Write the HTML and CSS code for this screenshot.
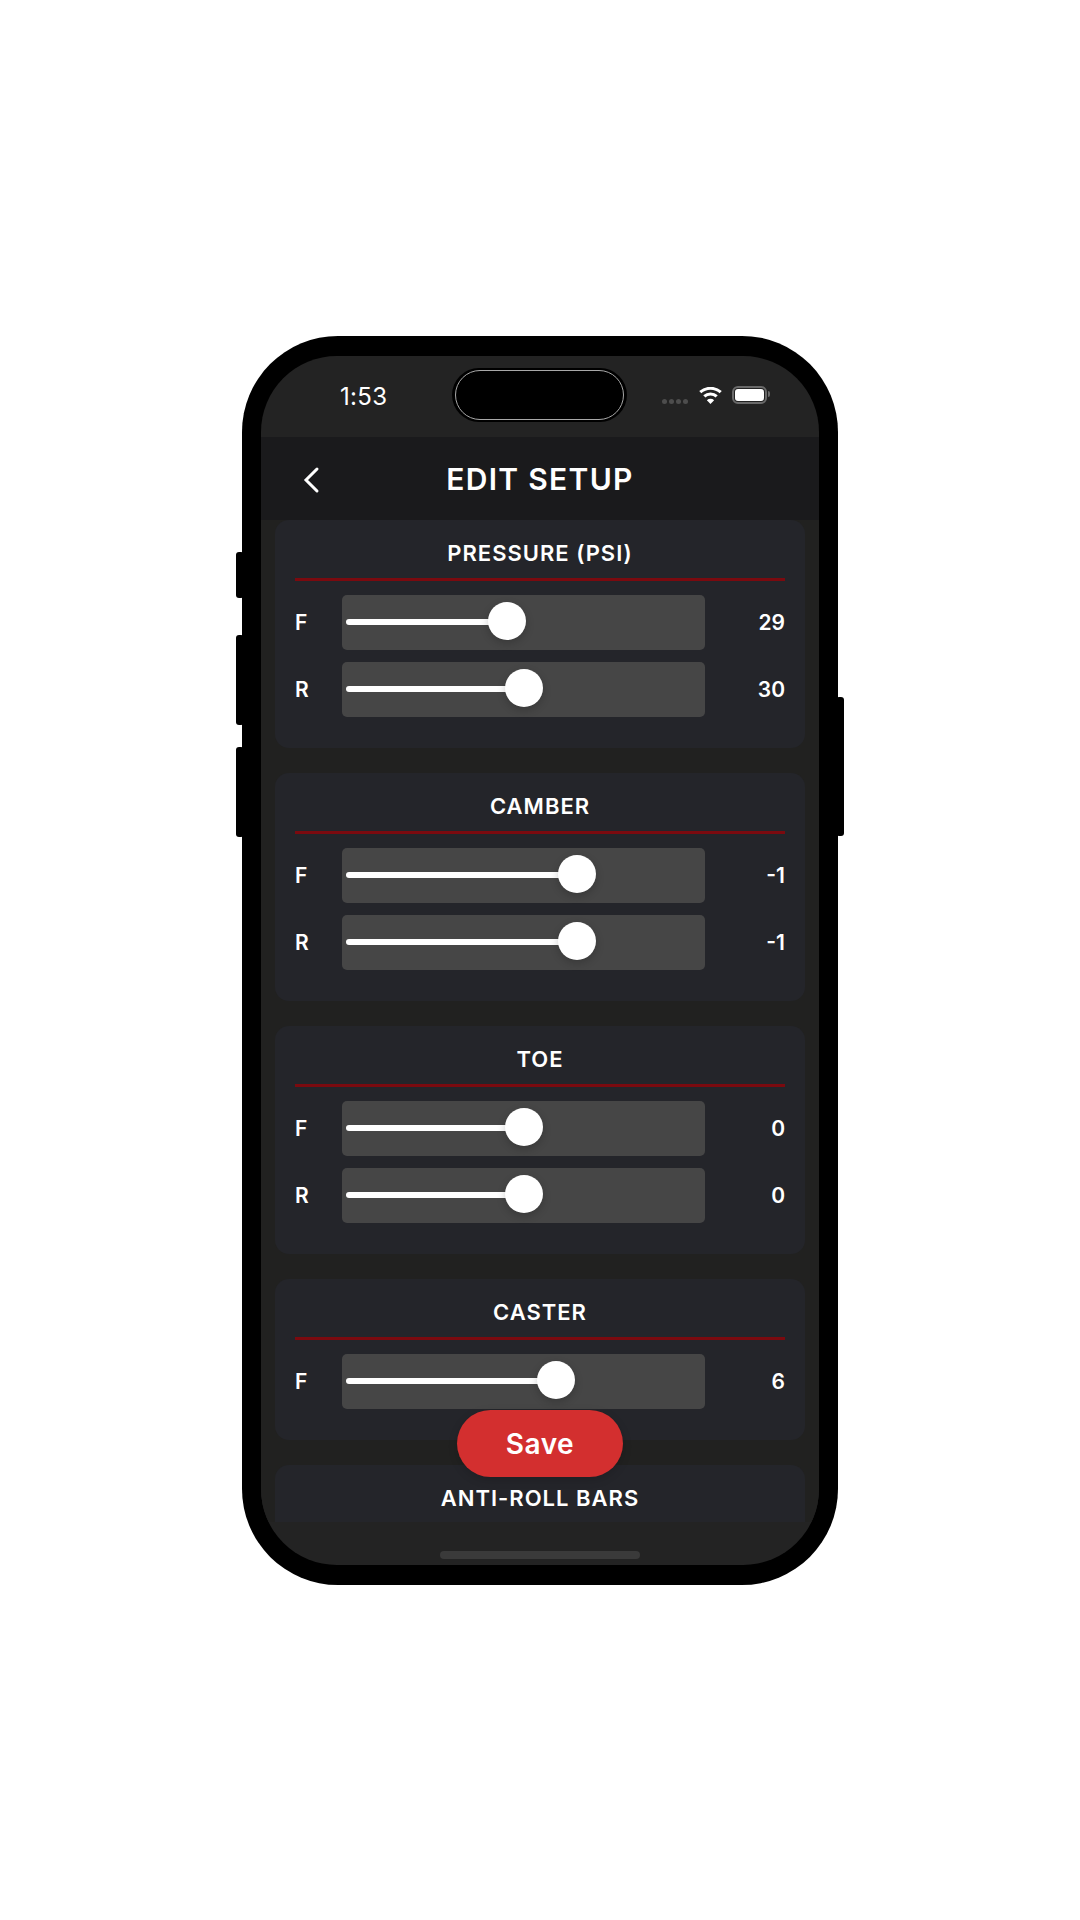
FILE: index.html
```html
<!DOCTYPE html>
<html lang="en">
<head>
    <meta charset="UTF-8">
    <meta name="viewport" content="width=device-width, initial-scale=1.0">
    <title>Edit Setup</title>
    <link rel="stylesheet" href="styles.css">
</head>
<body>
    <div class="phone">
        <span class="side-btn btn-mute"></span>
        <span class="side-btn btn-vol-up"></span>
        <span class="side-btn btn-vol-down"></span>
        <span class="side-btn btn-power"></span>

        <div class="screen">
            <div class="status-bar">
                <span class="status-time">1:53</span>
                <div class="island"><div class="island-inner"></div></div>
                <div class="status-icons">
                    <div class="signal"><i></i><i></i><i></i><i></i></div>
                    <svg class="wifi" width="23" height="17" viewBox="2 0 19 14.500" preserveAspectRatio="none">
                        <path d="M11.500 2.400c2.900 0 5.600 1.100 7.600 3l1.700-1.900a13.600 13.600 0 0 0-18.600 0l1.700 1.900c2-1.900 4.700-3 7.600-3z" fill="#fff"/>
                        <path d="M11.500 7.200c1.600 0 3.100.6 4.200 1.700l1.800-1.900a8.800 8.800 0 0 0-12 0l1.800 1.900c1.100-1.100 2.600-1.700 4.200-1.700z" fill="#fff"/>
                        <path d="M11.500 14.500l3-3.200a4.300 4.300 0 0 0-6 0z" fill="#fff"/>
                    </svg>
                    <div class="battery"><div class="battery-level"></div></div>
                </div>
            </div>

            <div class="header">
                <svg class="back" width="18" height="28" viewBox="0 0 18 28">
                    <path d="M15 3L4 14l11 11" fill="none" stroke="#fff" stroke-width="3" stroke-linecap="round"/>
                </svg>
                <h1>EDIT SETUP</h1>
            </div>

            <div class="content">
                <section class="card">
                    <h2>PRESSURE (PSI)</h2>
                    <div class="row">
                        <span class="row-label">F</span>
                        <div class="slider"><div class="fill" style="width: 161px"><span class="thumb"></span></div></div>
                        <span class="row-value">29</span>
                    </div>
                    <div class="row">
                        <span class="row-label">R</span>
                        <div class="slider"><div class="fill" style="width: 178px"><span class="thumb"></span></div></div>
                        <span class="row-value">30</span>
                    </div>
                </section>

                <section class="card">
                    <h2>CAMBER</h2>
                    <div class="row">
                        <span class="row-label">F</span>
                        <div class="slider"><div class="fill" style="width: 231px"><span class="thumb"></span></div></div>
                        <span class="row-value">-1</span>
                    </div>
                    <div class="row">
                        <span class="row-label">R</span>
                        <div class="slider"><div class="fill" style="width: 231px"><span class="thumb"></span></div></div>
                        <span class="row-value">-1</span>
                    </div>
                </section>

                <section class="card">
                    <h2>TOE</h2>
                    <div class="row">
                        <span class="row-label">F</span>
                        <div class="slider"><div class="fill" style="width: 178px"><span class="thumb"></span></div></div>
                        <span class="row-value">0</span>
                    </div>
                    <div class="row">
                        <span class="row-label">R</span>
                        <div class="slider"><div class="fill" style="width: 178px"><span class="thumb"></span></div></div>
                        <span class="row-value">0</span>
                    </div>
                </section>

                <section class="card">
                    <h2>CASTER</h2>
                    <div class="row">
                        <span class="row-label">F</span>
                        <div class="slider"><div class="fill" style="width: 210px"><span class="thumb"></span></div></div>
                        <span class="row-value">6</span>
                    </div>
                </section>

                <section class="card card-last">
                    <h2>ANTI-ROLL BARS</h2>
                </section>
            </div>

            <button class="save-btn">Save</button>

            <div class="home-area"><span class="home-bar"></span></div>
        </div>
    </div>
</body>
</html>
```

FILE: styles.css
```css
* {
    box-sizing: border-box;
}
body {
    margin: 0;
    width: 1080px;
    height: 1920px;
    display: flex;
    align-items: center;
    justify-content: center;
    background-color: #fff;
    font-family: Inter, "Noto Sans", sans-serif;
    color: #fff;
}
.phone {
    position: relative;
    width: 596px;
    height: 1249px;
    background: #000;
    border-radius: 96px;
    padding: 20px 19px;
}
.side-btn {
    position: absolute;
    width: 8px;
    background: #000;
    border-radius: 3px;
}
.btn-mute {
    left: -6px;
    top: 216px;
    height: 46px;
}
.btn-vol-up {
    left: -6px;
    top: 299px;
    height: 90px;
}
.btn-vol-down {
    left: -6px;
    top: 411px;
    height: 90px;
}
.btn-power {
    right: -6px;
    top: 361px;
    height: 139px;
}
.screen {
    position: relative;
    height: 100%;
    display: flex;
    flex-direction: column;
    background: #232323;
    border-radius: 76px;
    overflow: hidden;
}
.status-bar {
    flex: none;
    height: 81px;
    display: flex;
    align-items: center;
    justify-content: space-between;
    padding: 0 52px 0 79px;
}
.status-time {
    font-size: 24px;
    letter-spacing: 0.3px;
}
.island {
    position: absolute;
    left: 191px;
    top: 12px;
    width: 175px;
    height: 54px;
    padding: 2px 3px;
    background: #000;
    border-radius: 27px;
}
.island-inner {
    height: 100%;
    background: #000;
    border: 1px solid #a8a8a8;
    border-radius: 25px;
}
.status-icons {
    display: flex;
    align-items: center;
    padding-bottom: 2px;
}
.signal {
    display: flex;
    gap: 2px;
    margin-right: 11px;
    margin-top: 13px;
}
.signal i {
    width: 5px;
    height: 5px;
    border-radius: 50%;
    background: #4d4d4d;
}
.wifi {
    margin-right: 10px;
}
.battery {
    position: relative;
    width: 35px;
    height: 18px;
    padding: 1px;
    border: 2px solid #6a6a6a;
    border-radius: 6px;
}
.battery::after {
    content: "";
    position: absolute;
    right: -5px;
    top: 3px;
    width: 2px;
    height: 6px;
    background: #6a6a6a;
    border-radius: 0 2px 2px 0;
}
.battery-level {
    height: 100%;
    background: #fff;
    border-radius: 3px;
}
.header {
    position: relative;
    flex: none;
    height: 83px;
    display: flex;
    align-items: center;
    justify-content: center;
    padding-top: 2px;
    background: #1a1a1c;
}
.header h1 {
    margin: 0;
    font-size: 30px;
    font-weight: 600;
    letter-spacing: 1.3px;
}
.back {
    position: absolute;
    left: 41px;
    top: 29px;
}
.content {
    flex: 1;
    min-height: 0;
    overflow: hidden;
    padding: 0 14px;
    background: #212120;
}
.card {
    display: flex;
    flex-direction: column;
    gap: 12px;
    margin-bottom: 25px;
    padding: 0 20px 31px;
    background: #24252a;
    border-radius: 14px;
}
/* runs on below the fold, only its title is in view */
.card-last {
    height: 120px;
}
.card h2 {
    margin: 0 0 2px;
    height: 61px;
    line-height: 67px;
    font-size: 22px;
    font-weight: 600;
    letter-spacing: 1px;
    text-align: center;
    border-bottom: 3px solid #7b0a0f;
}
.row {
    display: flex;
    align-items: center;
}
.row-label {
    width: 47px;
    font-size: 21px;
    font-weight: 600;
}
.row-value {
    flex: 1;
    text-align: right;
    font-size: 21px;
    font-weight: 600;
}
.slider {
    width: 363px;
    height: 55px;
    display: flex;
    align-items: center;
    padding: 0 4px;
    background: #464646;
    border-radius: 5px;
}
.fill {
    position: relative;
    height: 6px;
    background: #fff;
    border-radius: 3px;
}
.thumb {
    position: absolute;
    right: -19px;
    top: -17px;
    width: 38px;
    height: 38px;
    background: #fff;
    border-radius: 50%;
    box-shadow: 0 3px 8px rgba(0, 0, 0, 0.2);
}
.save-btn {
    position: absolute;
    left: 196px;
    top: 1054px;
    width: 166px;
    height: 67px;
    padding-top: 3px;
    background: #d32f2f;
    border: none;
    border-radius: 34px;
    color: #fff;
    font-family: inherit;
    font-size: 28px;
    font-weight: 600;
    letter-spacing: 0.5px;
    box-shadow: 0 3px 10px rgba(0, 0, 0, 0.15);
}
.home-area {
    flex: none;
    height: 43px;
    display: flex;
    justify-content: center;
    padding-top: 29px;
}
.home-bar {
    width: 200px;
    height: 8px;
    background: #3a3a3a;
    border-radius: 4px;
}
```
